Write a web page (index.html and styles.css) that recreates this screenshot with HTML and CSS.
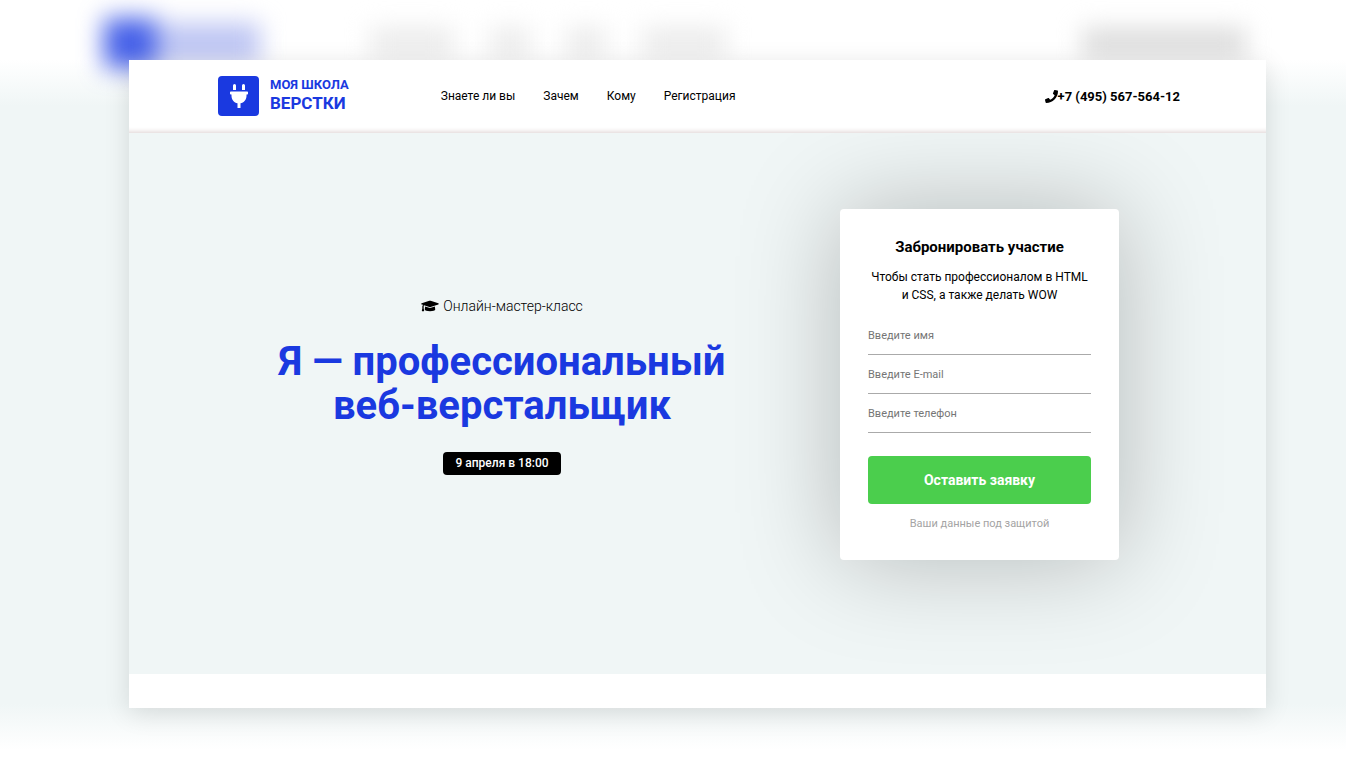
FILE: index.html
```html
<!DOCTYPE html>
<html lang="ru">
<head>
  <meta charset="UTF-8">
  <meta name="viewport" content="width=device-width, initial-scale=1">
  <title>Моя школа верстки</title>
  <link rel="stylesheet" href="styles.css">
</head>
<body>

<!-- Blurred backdrop -->
<div class="backdrop" aria-hidden="true">
  <div class="backdrop-header">
    <span class="blot blot-logo"></span>
    <span class="blot blot-name"></span>
    <div class="backdrop-nav">
      <span class="blot blot-long"></span>
      <span class="blot blot-short"></span>
      <span class="blot blot-short"></span>
      <span class="blot blot-long"></span>
    </div>
    <span class="blot blot-phone"></span>
  </div>
</div>

<div class="page">
  <header class="header">
    <a href="#" class="logo">
      <span class="logo-icon">
        <svg width="18" height="24" viewBox="0 0 384 512" fill="#fff"><path d="M320 32a32 32 0 0 0-64 0v96h64zM368 160H16a16 16 0 0 0-16 16v32a16 16 0 0 0 16 16h16v32c0 77 55 142 128 157v99h64v-99c73-15 128-80 128-157v-32h16a16 16 0 0 0 16-16v-32a16 16 0 0 0-16-16zM128 32a32 32 0 0 0-64 0v96h64z"/></svg>
      </span>
      <span class="logo-text">
        <span class="logo-top">МОЯ ШКОЛА</span>
        <span class="logo-bottom">ВЕРСТКИ</span>
      </span>
    </a>

    <nav class="nav">
      <a href="#about">Знаете ли вы</a>
      <a href="#why">Зачем</a>
      <a href="#whom">Кому</a>
      <a href="#form">Регистрация</a>
    </nav>

    <a href="tel:+749556756412" class="phone">
      <svg width="13" height="13" viewBox="0 0 512 512"><path d="M493.400 24.600l-104-24c-11.300-2.600-22.900 3.300-27.500 13.900l-48 112c-4.200 9.800-1.400 21.300 6.900 28l60.600 49.600c-36 76.700-98.900 140.500-177.200 177.200l-49.600-60.600c-6.800-8.300-18.200-11.100-28-6.900l-112 48C3.900 366.500-2 378.100.6 389.400l24 104C27.100 504.200 36.700 512 48 512c256.100 0 464-207.500 464-464 0-11.200-7.700-20.900-18.600-23.400z"/></svg>
      <span>+7 (495) 567-564-12</span>
    </a>
  </header>

  <main class="hero">
    <section class="intro">
      <p class="label">
        <svg width="18" height="14" viewBox="0 0 640 512"><path d="M622.300 153.200L343.500 67.500c-15.200-4.700-31.800-4.700-47 0L17.700 153.200c-23.600 7.200-23.600 38.300 0 45.600l48.600 14.900C55.600 227 49 243.200 48.400 261 37.800 267.100 32 277.700 32 288c0 10.800 5.700 19.900 14 25.600L20.500 428.500C18.200 438.500 25.800 448 36.100 448h55.700c10.300 0 17.900-9.500 15.700-19.500L82 313.600c8.300-5.700 14-14.800 14-25.600 0-10.600-5.500-19.500-13.600-25.200.7-13.300 7.500-25.100 18.600-32.800l195.500 60.100c9.100 2.800 27 6.500 47 0l278.800-85.700c23.700-7.200 23.700-38.300 0-45.500zM352.800 320.800c-30.700 9.400-55.400 3.500-65.700 0L142.100 276 128 384c0 35.300 86 64 192 64s192-28.700 192-64l-14.100-108z"/></svg>
        <span>Онлайн-мастер-класс</span>
      </p>
      <h1 class="title">Я — профессиональный веб-верстальщик</h1>
      <p class="date">9 апреля в 18:00</p>
    </section>

    <form class="card" id="form">
      <h2 class="card-title">Забронировать участие</h2>
      <p class="card-text">Чтобы стать профессионалом в HTML и CSS, а также делать WOW</p>
      <input class="field" type="text" placeholder="Введите имя" aria-label="Введите имя">
      <input class="field" type="email" placeholder="Введите E-mail" aria-label="Введите E-mail">
      <input class="field" type="tel" placeholder="Введите телефон" aria-label="Введите телефон">
      <button class="submit" type="submit">Оставить заявку</button>
      <p class="note">Ваши данные под защитой</p>
    </form>
  </main>
</div>

</body>
</html>
```
FILE: styles.css
```css
* { box-sizing: border-box; }

body {
  margin: 0;
  padding: 60px 80px 60px 129px;
  min-height: 100vh;
  background: #fff;
  color: #000;
  font-family: Roboto, "Liberation Sans", sans-serif;
  position: relative;
  overflow-x: hidden;
}

a {
  color: inherit;
  text-decoration: none;
}

h1, h2, p { margin: 0; }

/* Backdrop */
.backdrop {
  position: absolute;
  inset: 0;
  overflow: hidden;
  background: linear-gradient(#fff 60px, #f0f6f6 106px, #f0f6f6 calc(100% - 64px), #fff calc(100% - 18px));
}

.backdrop-header {
  display: flex;
  align-items: center;
  height: 86px;
  padding: 0 100px 0 104px;
  filter: blur(12px);
}

.blot {
  height: 30px;
  background: #ebebeb;
}

.blot-logo {
  width: 52px;
  height: 50px;
  background: #4560e8;
}

.blot-name {
  width: 104px;
  height: 40px;
  background: #bdc5f3;
}

.backdrop-nav {
  display: flex;
  gap: 36px;
  margin-left: 110px;
}

.blot-long { width: 84px; }
.blot-short { width: 40px; }

.blot-phone {
  width: 164px;
  margin-left: auto;
  background: #dcdcdc;
}

/* Page */
.page {
  position: relative;
  min-height: 648px;
  background: #fff;
  box-shadow: 0 5px 24px rgba(0,0,0,0.12);
}

.header {
  display: flex;
  align-items: center;
  height: 73px;
  padding: 0 86px 1px 89px;
  box-shadow: inset 0 -6px 5px -5px rgba(80,20,20,0.2);
}

.logo {
  display: flex;
  gap: 11px;
  color: #1a39e0;
  font-weight: 700;
}

.logo-icon {
  display: flex;
  align-items: center;
  justify-content: center;
  width: 41px;
  height: 40px;
  background: #1a39e0;
  border-radius: 4px;
}

.logo-top,
.logo-bottom {
  display: block;
  font-size: 13px;
  line-height: 18px;
}

.logo-bottom { font-size: 17px; }

.nav {
  display: flex;
  gap: 28px;
  margin-left: 92px;
  font-size: 12px;
}

.phone {
  display: flex;
  align-items: center;
  margin-left: auto;
  font-size: 13px;
  font-weight: 700;
}

/* Hero */
.hero {
  display: flex;
  align-items: center;
  gap: 54px;
  padding: 76px 147px 114px 89px;
  background: #f0f6f6;
  overflow: hidden;
}

.intro {
  flex: 1;
  padding-top: 2px;
  text-align: center;
}

.label {
  display: flex;
  align-items: center;
  justify-content: center;
  gap: 4px;
  font-size: 14px;
  font-weight: 300;
  line-height: 20px;
}

.title {
  max-width: 480px;
  margin: 24px auto;
  color: #1a39e0;
  font-size: 40px;
  font-weight: 700;
  line-height: 44px;
}

.date {
  display: inline-block;
  padding: 0 12px;
  background: #000;
  border-radius: 4px;
  color: #fff;
  font-size: 12px;
  font-weight: 500;
  line-height: 23px;
}

/* Form */
.card {
  flex: 0 0 279px;
  padding: 28px;
  background: #fff;
  border-radius: 4px;
  box-shadow: 0 0 100px rgba(0,0,0,0.25);
  text-align: center;
}

.card-title {
  margin-bottom: 11px;
  font-size: 15px;
  font-weight: 700;
  line-height: 20px;
}

.card-text {
  margin-bottom: 12px;
  font-size: 12px;
  line-height: 18px;
}

.field {
  display: block;
  width: 100%;
  height: 39px;
  padding: 0;
  border: none;
  border-bottom: 1px solid #aaa;
  background: none;
  font-family: inherit;
  font-size: 11px;
}

.field::placeholder { color: #757575; }

.submit {
  display: block;
  width: 100%;
  height: 48px;
  margin: 23px 0 12px;
  border: none;
  border-radius: 4px;
  background: #4bce4d;
  color: #fff;
  font-family: inherit;
  font-size: 14px;
  font-weight: 700;
  cursor: pointer;
}

.note {
  color: #a4a4a4;
  font-size: 11px;
  line-height: 16px;
}
```
